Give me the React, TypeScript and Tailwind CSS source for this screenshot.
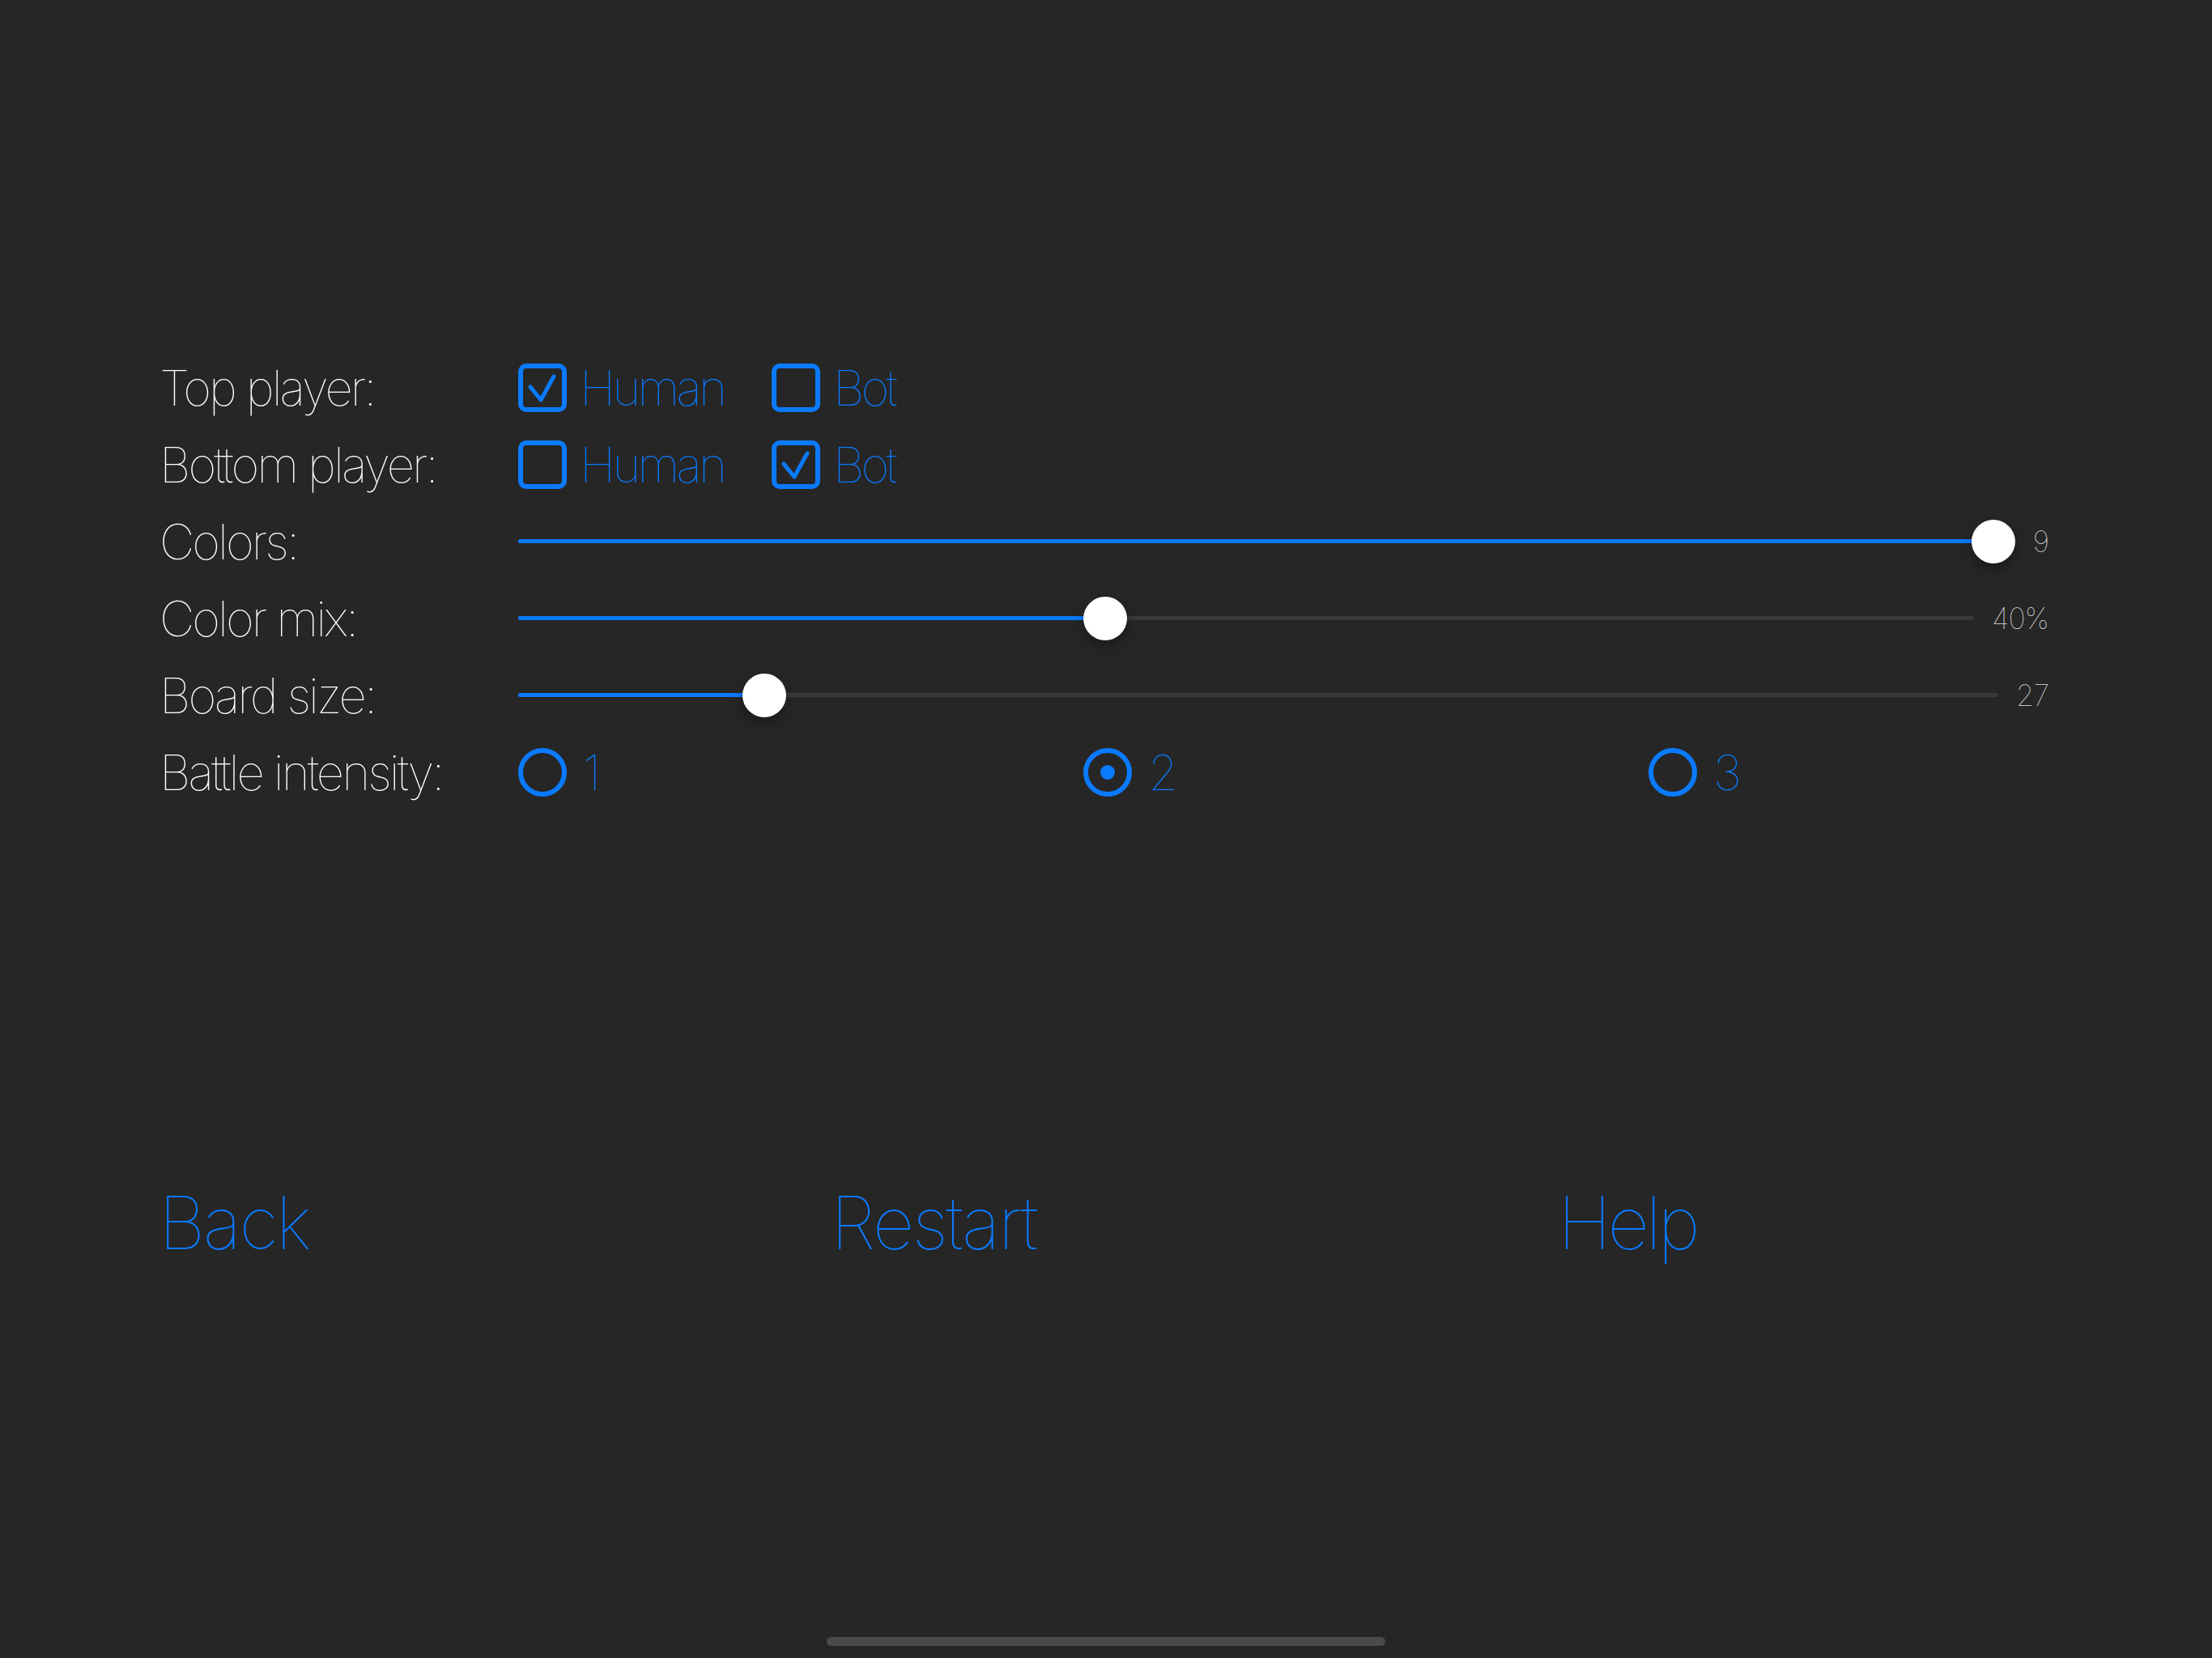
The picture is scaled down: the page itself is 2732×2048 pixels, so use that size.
import React from 'react';

const BLUE = '#0a7aff';

type Option = { label: string; checked: boolean };

const CheckBox: React.FC<Option> = ({ label, checked }) => (
  <div className="w-[313px] flex items-center gap-[16px]">
    <div className="w-[60px] h-[60px] shrink-0 rounded-[10px] border-[6px] border-[#0a7aff] flex items-center justify-center">
      {checked && (
        <svg width="60" height="60" viewBox="0 0 60 60" className="-m-[6px]">
          <path d="M15 29 L28 45 L44 16" fill="none" stroke={BLUE} strokeWidth="5" strokeLinecap="round" strokeLinejoin="round" />
        </svg>
      )}
    </div>
    <span className="text-[60px] leading-none tracking-[-0.065em] text-[#0a7aff]">{label}</span>
  </div>
);

const Radio: React.FC<Option & { wide?: boolean }> = ({ label, checked, wide }) => (
  <div className={`${wide ? 'w-[698px]' : ''} flex items-center gap-[20px]`}>
    <div className="w-[60px] h-[60px] shrink-0 rounded-full border-[6px] border-[#0a7aff] flex items-center justify-center">
      {checked && <div className="w-[18px] h-[18px] rounded-full bg-[#0a7aff]" />}
    </div>
    <span className="text-[60px] leading-none text-[#0a7aff]">{label}</span>
  </div>
);

const Slider: React.FC<{ fraction: number; value: string }> = ({ fraction, value }) => (
  <div className="flex-1 flex items-center">
    <div className="relative flex-1 h-[54px] flex items-center">
      <div className="w-full h-[5px] rounded-full bg-[#3a3a3c]" />
      <div
        className="absolute left-0 top-[24.5px] h-[5px] rounded-full bg-[#0a7aff]"
        style={{ width: `calc((100% - 54px) * ${fraction} + 27px)` }}
      />
      <div
        className="absolute top-0 w-[54px] h-[54px] rounded-full bg-white shadow-[0_6px_16px_rgba(0,0,0,0.35)]"
        style={{ left: `calc((100% - 54px) * ${fraction})` }}
      />
    </div>
    <span className="ml-[22px] text-[36px] leading-none tracking-[-0.03em] text-[#dcdcdc]">{value}</span>
  </div>
);

const Row: React.FC<{ label: string; children: React.ReactNode }> = ({ label, children }) => (
  <div className="h-[95px] flex items-center">
    <div className="w-[443px] shrink-0 text-[60px] leading-none tracking-[-0.05em] text-white">{label}</div>
    <div className="flex-1 flex items-center">{children}</div>
  </div>
);

export default function App() {
  return (
    <div className="relative w-[2732px] h-[2048px] bg-[#262626] overflow-hidden font-['Inter','Roboto',sans-serif] font-thin">
      <div className="pt-[431px] pl-[197px] pr-[202px] flex flex-col">
        <Row label="Top player:">
          <CheckBox label="Human" checked />
          <CheckBox label="Bot" checked={false} />
        </Row>
        <Row label="Bottom player:">
          <CheckBox label="Human" checked={false} />
          <CheckBox label="Bot" checked />
        </Row>
        <Row label="Colors:">
          <Slider fraction={1} value="9" />
        </Row>
        <Row label="Color mix:">
          <Slider fraction={0.4} value="40%" />
        </Row>
        <Row label="Board size:">
          <Slider fraction={0.156} value="27" />
        </Row>
        <Row label="Battle intensity:">
          <Radio label="1" checked={false} wide />
          <Radio label="2" checked wide />
          <Radio label="3" checked={false} />
        </Row>
      </div>

      <div className="mt-[465px] pl-[196px] flex text-[90px] leading-none tracking-[-0.03em] text-[#0a7aff]">
        <div className="w-[830px]">Back</div>
        <div className="w-[898px]">Restart</div>
        <div className="tracking-[-0.05em]">Help</div>
      </div>

      <div className="absolute left-[1021px] top-[2022px] w-[690px] h-[11px] rounded-full bg-[#4a4a4a]" />
    </div>
  );
}
